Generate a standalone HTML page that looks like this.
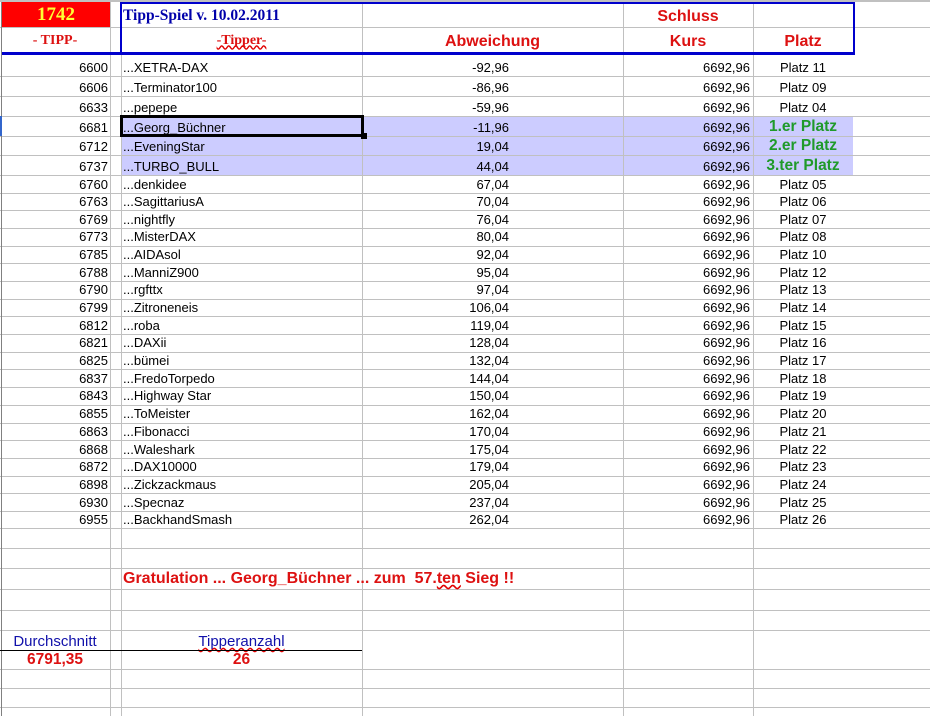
<!DOCTYPE html>
<html><head><meta charset="utf-8">
<style>
*{margin:0;padding:0;box-sizing:border-box}
body{width:930px;height:716px;background:#fff;position:relative;overflow:hidden;font-family:"Liberation Sans",Arial,sans-serif;font-size:13px;color:#000}
.h{position:absolute;left:0;width:930px;height:1px;background:#c0c0c0}
.v{position:absolute;top:0;width:1px;height:716px;background:#c0c0c0}
.r{position:absolute;left:0;width:930px}
.r div{position:absolute;top:0;height:100%;display:flex;align-items:center;white-space:nowrap}
.a{left:0;width:108px;justify-content:flex-end}
.n{left:123px}
.d{left:362px;width:147px;justify-content:flex-end}
.k{left:623px;width:127px;justify-content:flex-end}
.p{left:753px;width:100px;justify-content:center}
.g{color:#1f9a2a;font-weight:bold;font-size:15.5px}
.hl{position:absolute;left:121px;width:732px;background:#ccccff}
.sq{text-decoration:underline wavy #e00000;text-decoration-skip-ink:none}
</style></head><body>
<div class="hl" style="top:116px;height:59px"></div>
<div class="h" style="top:27px"></div>
<div class="h" style="top:76px"></div><div class="h" style="top:96px"></div><div class="h" style="top:116px"></div><div class="h" style="top:136px"></div><div class="h" style="top:155px"></div><div class="h" style="top:175px"></div>
<div class="h" style="top:193px"></div><div class="h" style="top:210px"></div><div class="h" style="top:228px"></div><div class="h" style="top:246px"></div><div class="h" style="top:263px"></div><div class="h" style="top:281px"></div><div class="h" style="top:299px"></div><div class="h" style="top:316px"></div><div class="h" style="top:334px"></div><div class="h" style="top:352px"></div><div class="h" style="top:369px"></div><div class="h" style="top:387px"></div><div class="h" style="top:405px"></div><div class="h" style="top:423px"></div><div class="h" style="top:440px"></div><div class="h" style="top:458px"></div><div class="h" style="top:476px"></div><div class="h" style="top:493px"></div><div class="h" style="top:511px"></div><div class="h" style="top:528px"></div>
<div class="h" style="top:548px"></div><div class="h" style="top:568px"></div><div class="h" style="top:589px"></div><div class="h" style="top:610px"></div><div class="h" style="top:630px"></div><div class="h" style="top:669px"></div><div class="h" style="top:688px"></div><div class="h" style="top:707px"></div>
<div class="v" style="left:1px;background:#808080"></div>
<div class="v" style="left:110px"></div><div class="v" style="left:121px;top:54px;height:662px"></div>
<div class="v" style="left:362px"></div><div class="v" style="left:623px"></div><div class="v" style="left:753px"></div>
<div class="v" style="left:853px;height:54px"></div>
<div style="position:absolute;left:0;top:0;width:930px;height:2px;background:#c0c0c0"></div>
<div style="position:absolute;left:2px;top:2px;width:108px;height:25px;background:#ff0000;color:#ffff33;font:bold 19px 'Liberation Serif',serif;display:flex;align-items:center;justify-content:center">1742</div>
<div style="position:absolute;left:120px;top:2px;width:735px;height:52px;border:2px solid #0000cc;border-bottom:none"></div>
<div style="position:absolute;left:2px;top:52px;width:853px;height:2.5px;background:#0000cc"></div>
<div style="position:absolute;left:123px;top:4px;height:23px;display:flex;align-items:center;color:#0000aa;font:bold 15.5px 'Liberation Serif',serif;white-space:nowrap">Tipp-Spiel v. 10.02.2011</div>
<div style="position:absolute;left:0;top:29px;width:110px;height:23px;display:flex;align-items:center;justify-content:center;color:#dd1111;font:bold 14px 'Liberation Serif',serif">- TIPP-</div>
<div style="position:absolute;left:121px;top:29px;width:241px;height:23px;display:flex;align-items:center;justify-content:center;color:#dd1111;font:bold 14px 'Liberation Serif',serif"><span class="sq">-Tipper-</span></div>
<div style="position:absolute;left:362px;top:29px;width:261px;height:26px;display:flex;align-items:center;justify-content:center;color:#dd1111;font:bold 16px 'Liberation Sans',sans-serif">Abweichung</div>
<div style="position:absolute;left:623px;top:4px;width:130px;height:26px;display:flex;align-items:center;justify-content:center;color:#dd1111;font:bold 16px 'Liberation Sans',sans-serif">Schluss</div>
<div style="position:absolute;left:623px;top:29px;width:130px;height:26px;display:flex;align-items:center;justify-content:center;color:#dd1111;font:bold 16px 'Liberation Sans',sans-serif">Kurs</div>
<div style="position:absolute;left:753px;top:29px;width:100px;height:26px;display:flex;align-items:center;justify-content:center;color:#dd1111;font:bold 16px 'Liberation Sans',sans-serif">Platz</div>
<div class="r" style="top:57px;height:20px"><div class="a">6600</div><div class="n">...XETRA-DAX</div><div class="d">-92,96</div><div class="k">6692,96</div><div class="p">Platz 11</div></div>
<div class="r" style="top:77px;height:20px"><div class="a">6606</div><div class="n">...Terminator100</div><div class="d">-86,96</div><div class="k">6692,96</div><div class="p">Platz 09</div></div>
<div class="r" style="top:97px;height:20px"><div class="a">6633</div><div class="n">...pepepe</div><div class="d">-59,96</div><div class="k">6692,96</div><div class="p">Platz 04</div></div>
<div class="r" style="top:117px;height:20px"><div class="a">6681</div><div class="n">...Georg_Büchner</div><div class="d">-11,96</div><div class="k">6692,96</div><div class="p g">1.er Platz</div></div>
<div class="r" style="top:136px;height:20px"><div class="a">6712</div><div class="n">...EveningStar</div><div class="d">19,04</div><div class="k">6692,96</div><div class="p g">2.er Platz</div></div>
<div class="r" style="top:156px;height:20px"><div class="a">6737</div><div class="n">...TURBO_BULL</div><div class="d">44,04</div><div class="k">6692,96</div><div class="p g">3.ter Platz</div></div>
<div class="r" style="top:176px;height:17px"><div class="a">6760</div><div class="n">...denkidee</div><div class="d">67,04</div><div class="k">6692,96</div><div class="p">Platz 05</div></div>
<div class="r" style="top:193px;height:17px"><div class="a">6763</div><div class="n">...SagittariusA</div><div class="d">70,04</div><div class="k">6692,96</div><div class="p">Platz 06</div></div>
<div class="r" style="top:211px;height:17px"><div class="a">6769</div><div class="n">...nightfly</div><div class="d">76,04</div><div class="k">6692,96</div><div class="p">Platz 07</div></div>
<div class="r" style="top:228px;height:17px"><div class="a">6773</div><div class="n">...MisterDAX</div><div class="d">80,04</div><div class="k">6692,96</div><div class="p">Platz 08</div></div>
<div class="r" style="top:246px;height:17px"><div class="a">6785</div><div class="n">...AIDAsol</div><div class="d">92,04</div><div class="k">6692,96</div><div class="p">Platz 10</div></div>
<div class="r" style="top:264px;height:17px"><div class="a">6788</div><div class="n">...ManniZ900</div><div class="d">95,04</div><div class="k">6692,96</div><div class="p">Platz 12</div></div>
<div class="r" style="top:281px;height:17px"><div class="a">6790</div><div class="n">...rgfttx</div><div class="d">97,04</div><div class="k">6692,96</div><div class="p">Platz 13</div></div>
<div class="r" style="top:299px;height:17px"><div class="a">6799</div><div class="n">...Zitroneneis</div><div class="d">106,04</div><div class="k">6692,96</div><div class="p">Platz 14</div></div>
<div class="r" style="top:317px;height:17px"><div class="a">6812</div><div class="n">...roba</div><div class="d">119,04</div><div class="k">6692,96</div><div class="p">Platz 15</div></div>
<div class="r" style="top:334px;height:17px"><div class="a">6821</div><div class="n">...DAXii</div><div class="d">128,04</div><div class="k">6692,96</div><div class="p">Platz 16</div></div>
<div class="r" style="top:352px;height:17px"><div class="a">6825</div><div class="n">...bümei</div><div class="d">132,04</div><div class="k">6692,96</div><div class="p">Platz 17</div></div>
<div class="r" style="top:370px;height:17px"><div class="a">6837</div><div class="n">...FredoTorpedo</div><div class="d">144,04</div><div class="k">6692,96</div><div class="p">Platz 18</div></div>
<div class="r" style="top:387px;height:17px"><div class="a">6843</div><div class="n">...Highway Star</div><div class="d">150,04</div><div class="k">6692,96</div><div class="p">Platz 19</div></div>
<div class="r" style="top:405px;height:17px"><div class="a">6855</div><div class="n">...ToMeister</div><div class="d">162,04</div><div class="k">6692,96</div><div class="p">Platz 20</div></div>
<div class="r" style="top:423px;height:17px"><div class="a">6863</div><div class="n">...Fibonacci</div><div class="d">170,04</div><div class="k">6692,96</div><div class="p">Platz 21</div></div>
<div class="r" style="top:441px;height:17px"><div class="a">6868</div><div class="n">...Waleshark</div><div class="d">175,04</div><div class="k">6692,96</div><div class="p">Platz 22</div></div>
<div class="r" style="top:458px;height:17px"><div class="a">6872</div><div class="n">...DAX10000</div><div class="d">179,04</div><div class="k">6692,96</div><div class="p">Platz 23</div></div>
<div class="r" style="top:476px;height:17px"><div class="a">6898</div><div class="n">...Zickzackmaus</div><div class="d">205,04</div><div class="k">6692,96</div><div class="p">Platz 24</div></div>
<div class="r" style="top:494px;height:17px"><div class="a">6930</div><div class="n">...Specnaz</div><div class="d">237,04</div><div class="k">6692,96</div><div class="p">Platz 25</div></div>
<div class="r" style="top:511px;height:17px"><div class="a">6955</div><div class="n">...BackhandSmash</div><div class="d">262,04</div><div class="k">6692,96</div><div class="p">Platz 26</div></div>
<div style="position:absolute;left:120px;top:115px;width:244px;height:22px;border:3px solid #000"></div>
<div style="position:absolute;left:361px;top:133px;width:6px;height:6px;background:#000"></div>
<div style="position:absolute;left:0;top:116px;width:2px;height:20px;background:#3366cc"></div>
<div style="position:absolute;left:123px;top:569px;height:20px;display:flex;align-items:center;color:#dd1111;font-weight:bold;font-size:16px;white-space:nowrap">Gratulation ... Georg_Büchner ... zum &nbsp;57.<span class="sq">ten</span>&nbsp;Sieg !!</div>
<div style="position:absolute;left:0;top:630px;width:110px;height:20px;display:flex;align-items:flex-end;justify-content:center;color:#1010aa;font-size:15px">Durchschnitt</div>
<div style="position:absolute;left:121px;top:630px;width:241px;height:20px;display:flex;align-items:flex-end;justify-content:center;color:#1010aa;font-size:15px"><span class="sq">Tipperanzahl</span></div>
<div style="position:absolute;left:0;top:650px;width:362px;height:1px;background:#000"></div>
<div style="position:absolute;left:0;top:651px;width:110px;height:18px;display:flex;align-items:center;justify-content:center;color:#dd1111;font-weight:bold;font-size:15.5px">6791,35</div>
<div style="position:absolute;left:121px;top:651px;width:241px;height:18px;display:flex;align-items:center;justify-content:center;color:#dd1111;font-weight:bold;font-size:15.5px">26</div>
</body></html>
